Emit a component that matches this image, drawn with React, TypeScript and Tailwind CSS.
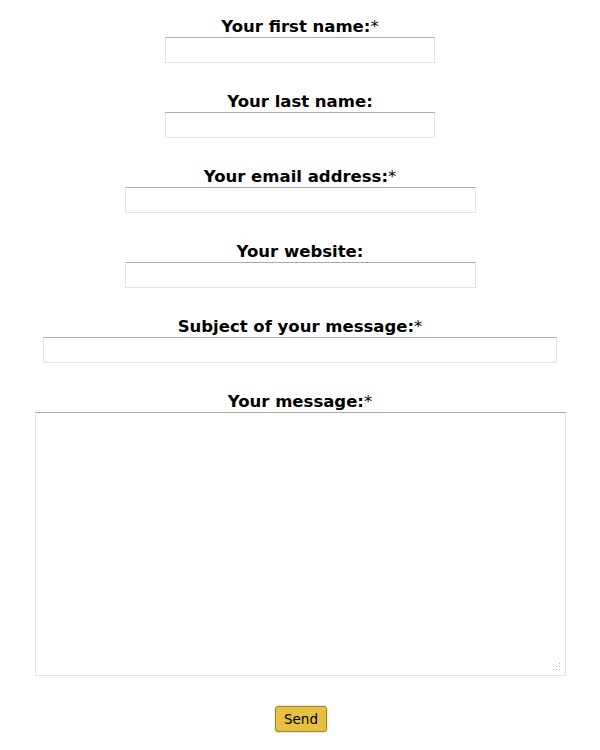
import React from "react"

const fields = [
  { label: "Your first name:", required: true, width: "w-[270px]" },
  { label: "Your last name:", required: false, width: "w-[270px]" },
  { label: "Your email address:", required: true, width: "w-[351px]" },
  { label: "Your website:", required: false, width: "w-[351px]" },
  { label: "Subject of your message:", required: true, width: "w-[514px]" },
]

const boxClass =
  "block mx-auto bg-white border border-[#e3e3e8] border-t-[#a9a9a9] outline-none"

function Label({ text, required }: { text: string; required: boolean }) {
  return (
    <label className="block h-[20px] leading-[19px] text-center text-[16.5px] font-bold text-black">
      {text}
      {required && <span className="font-normal">*</span>}
    </label>
  )
}

export default function App() {
  return (
    <form
      className="w-[600px] bg-white pt-[17px] pb-[17px]"
      style={{ fontFamily: "Verdana, 'DejaVu Sans', sans-serif" }}
    >
      {fields.map((f) => (
        <div key={f.label} className="mb-[29px]">
          <Label text={f.label} required={f.required} />
          <input type="text" className={`${boxClass} ${f.width} h-[26px]`} />
        </div>
      ))}

      <div className="mb-[30px]">
        <Label text="Your message:" required={true} />
        <div className="relative w-[531px] mx-auto">
          <textarea className={`${boxClass} w-[531px] h-[264px] resize-none`} />
          {/* resize grip */}
          <svg
            className="absolute right-[5px] bottom-[5px]"
            width="8"
            height="8"
            viewBox="0 0 8 8"
            fill="#b0b0b0"
          >
            <rect x="6" y="0" width="1" height="1" />
            <rect x="3" y="3" width="1" height="1" />
            <rect x="6" y="3" width="1" height="1" />
            <rect x="0" y="6" width="1" height="1" />
            <rect x="3" y="6" width="1" height="1" />
            <rect x="6" y="6" width="1" height="1" />
          </svg>
        </div>
      </div>

      <div className="flex justify-center pl-[2px]">
        <button
          type="button"
          className="w-[52px] h-[26px] rounded-[3px] border border-[#a8892a] bg-[#e6c040] text-[13.5px] text-black shadow-[0_0_2px_rgba(0,0,0,0.35)]"
        >
          Send
        </button>
      </div>
    </form>
  )
}
